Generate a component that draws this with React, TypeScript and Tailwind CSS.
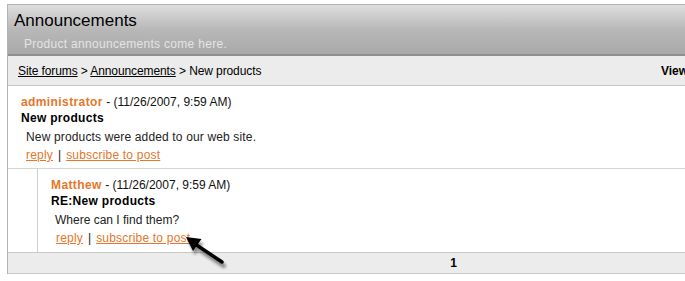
import React from 'react';

const font = { fontFamily: '"Liberation Sans", Arial, sans-serif' };

function PostLinks() {
    return (
        <div className="text-[12px] leading-[18px] text-[#222]">
            <a className="text-[#e6762b] underline tracking-[0.2px]">reply</a>
            <span className="mx-[5px]">|</span>
            <a className="text-[#e6762b] underline tracking-[0.2px]">subscribe to post</a>
        </div>
    );
}

function Arrow() {
    return (
        <svg className="absolute left-[180px] top-[228px]" width="56" height="46" viewBox="0 0 56 46">
            <defs>
                <filter id="blur" x="-50%" y="-50%" width="200%" height="200%">
                    <feGaussianBlur stdDeviation="1.6" />
                </filter>
            </defs>
            <g filter="url(#blur)" opacity="0.45" transform="translate(2 4)">
                <line x1="15" y1="16" x2="42" y2="34" stroke="#000" strokeWidth="4" strokeLinecap="round" />
                <polygon points="6,9 13,23 21.5,11" fill="#000" />
            </g>
            <line x1="15" y1="16" x2="42" y2="34" stroke="#000" strokeWidth="3.5" strokeLinecap="round" />
            <polygon points="6,9 13,23 21.5,11" fill="#000" />
        </svg>
    );
}

export default function App() {
    return (
        <div className="relative w-[685px] h-[281px] overflow-hidden bg-white" style={font}>
            <div className="ml-[7px] mt-[4px] w-[892px] border-l border-t border-[#b4b4b4]">
                {/* Header */}
                <div className="h-[51px] border-b-2 border-[#8f8f8f] bg-gradient-to-b from-[#dedede] via-[#b8b8b8] to-[#a9a9a9] pl-[6px] pt-[6px]">
                    <div className="text-[17px] leading-[20px] text-black">Announcements</div>
                    <div className="mt-[6px] pl-[10px] text-[12px] leading-[14px] text-[#e4e4e4] tracking-[0.3px]">
                        Product announcements come here.
                    </div>
                </div>

                {/* Breadcrumb */}
                <div className="flex h-[30px] items-center justify-between border-b border-[#c6c6c6] bg-[#ececec] pl-[10px] text-[12px] text-black">
                    <div className="tracking-[-0.1px]">
                        <a className="underline">Site forums</a>
                        <span> &gt; </span>
                        <a className="underline">Announcements</a>
                        <span> &gt; New products</span>
                    </div>
                    <div className="w-[238px] font-bold">View: Flat | Threaded</div>
                </div>

                {/* Post */}
                <div className="h-[83px] border-b border-[#d4d4d4] pl-[13px] pt-[8px]">
                    <div className="text-[12px] leading-[16px] text-[#111]">
                        <span className="font-bold text-[#e6762b] tracking-[0.4px]">administrator</span> - (11/26/2007, 9:59 AM)
                    </div>
                    <div className="text-[12px] leading-[16px] font-bold text-black tracking-[0.3px]">New products</div>
                    <div className="mt-[2px] pl-[5px] text-[12px] leading-[18px] text-[#222] tracking-[0.15px]">New products were added to our web site.</div>
                    <div className="pl-[5px]">
                        <PostLinks />
                    </div>
                </div>

                {/* Reply */}
                <div className="pl-[29px]">
                    <div className="h-[83px] border-l border-[#cfcfcf] pl-[13px] pt-[8px]">
                        <div className="text-[12px] leading-[16px] text-[#111]">
                            <span className="font-bold text-[#e6762b] tracking-[0.4px]">Matthew</span> - (11/26/2007, 9:59 AM)
                        </div>
                        <div className="text-[12px] leading-[16px] font-bold text-black tracking-[0.3px]">RE:New products</div>
                        <div className="mt-[2px] pl-[4px] text-[12px] leading-[18px] text-[#222]">Where can I find them?</div>
                        <div className="pl-[5px]">
                            <PostLinks />
                        </div>
                    </div>
                </div>

                {/* Pager */}
                <div className="flex h-[22px] items-center justify-center border-y border-[#c8c8c8] bg-[#ececec] text-[12px] font-bold text-black">
                    1
                </div>
            </div>
            <Arrow />
        </div>
    );
}
